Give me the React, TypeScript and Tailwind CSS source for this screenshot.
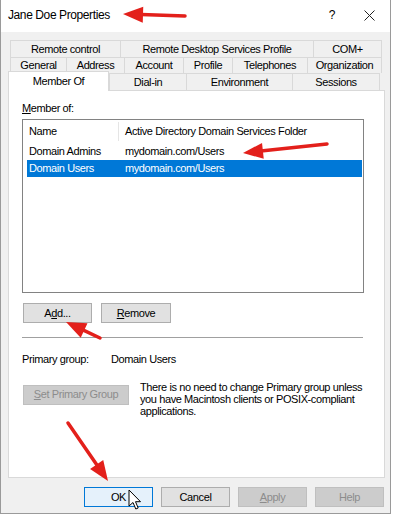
import React from "react";

const font = { fontFamily: '"Liberation Sans", Arial, sans-serif' };

const Tab = ({ label, w, last }: { label: string; w: string; last?: boolean }) => (
    <div
        className={`${w} h-full flex items-center justify-center border-t border-l border-[#d9d9d9] bg-[#f0f0f0] text-[11px] text-black ${last ? "border-r" : ""}`}
    >
        {label}
    </div>
);

const Btn = ({
    children,
    w = "w-[69px]",
    disabled,
    primary,
}: {
    children: React.ReactNode;
    w?: string;
    disabled?: boolean;
    primary?: boolean;
}) => (
    <div
        className={`${w} h-[20px] flex items-center justify-center text-[11px] border ${
            disabled
                ? "bg-[#cccccc] border-[#bfbfbf] text-[#8c8c8c]"
                : primary
                ? "bg-[#e5f1fb] border-[#0078d7] text-black"
                : "bg-[#e1e1e1] border-[#adadad] text-black"
        }`}
    >
        {children}
    </div>
);

const Arrow = ({ x1, y1, x2, y2 }: { x1: number; y1: number; x2: number; y2: number }) => {
    // tail (x1,y1) -> head (x2,y2)
    const dx = x2 - x1;
    const dy = y2 - y1;
    const len = Math.hypot(dx, dy);
    const ux = dx / len;
    const uy = dy / len;
    const hl = 20;
    const hw = 8;
    const bx = x2 - ux * hl;
    const by = y2 - uy * hl;
    const p1 = `${bx - uy * hw},${by + ux * hw}`;
    const p2 = `${bx + uy * hw},${by - ux * hw}`;
    return (
        <g>
            <line x1={x1} y1={y1} x2={bx + ux * 2} y2={by + uy * 2} stroke="#e3201b" strokeWidth="3.5" strokeLinecap="round" />
            <polygon points={`${x2},${y2} ${p1} ${p2}`} fill="#e3201b" />
        </g>
    );
};

export default function App() {
    return (
        <div className="w-[394px] h-[517px] bg-white overflow-hidden relative tracking-[-0.4px]" style={font}>
            <div className="w-[391px] h-[514px] border-l border-r border-b border-[#9a9a9a] bg-[#f0f0f0] flex flex-col">
                {/* Title bar */}
                <div className="h-[32px] bg-white flex items-center pl-[7px] text-[12px] text-black">
                    <span className="flex-1 pb-[2px]">Jane Doe Properties</span>
                    <span className="w-[40px] text-center pb-[2px]">?</span>
                    <span className="w-[38px] flex justify-center pr-[4px] pb-[2px]">
                        <svg width="11" height="11" viewBox="0 0 11 11">
                            <path d="M0.5 0.5 L10.5 10.5 M10.5 0.5 L0.5 10.5" stroke="#222" strokeWidth="1" />
                        </svg>
                    </span>
                </div>

                {/* Tabs */}
                <div className="mt-[8px] ml-[9px] w-[372px] flex flex-col">
                    <div className="h-[17px] flex">
                        <Tab label="Remote control" w="w-[110px]" />
                        <Tab label="Remote Desktop Services Profile" w="w-[193px]" />
                        <Tab label="COM+" w="w-[69px]" last />
                    </div>
                    <div className="h-[16px] flex">
                        <Tab label="General" w="w-[56px]" />
                        <Tab label="Address" w="w-[58px]" />
                        <Tab label="Account" w="w-[59px]" />
                        <Tab label="Profile" w="w-[49px]" />
                        <Tab label="Telephones" w="w-[75px]" />
                        <Tab label="Organization" w="w-[75px]" last />
                    </div>
                    <div className="h-[17px] flex">
                        <div className="w-[101px] -ml-[2px] h-[20px] relative -top-[2px] z-10 flex items-start justify-center pt-[1px] bg-white border-t border-l border-r border-[#d9d9d9] text-[11px]">
                            Member Of
                        </div>
                        <Tab label="Dial-in" w="w-[77px]" />
                        <Tab label="Environment" w="w-[106px]" />
                        <Tab label="Sessions" w="w-[88px]" last />
                    </div>
                </div>

                {/* Page */}
                <div className="ml-[7px] w-[377px] h-[388px] bg-white border border-[#d9d9d9] pl-[13px] pt-[9px] text-[11px] text-black">
                    <div className="h-[18px]">
                        <span className="underline underline-offset-1">M</span>ember of:
                    </div>
                    <div className="mt-[1px] w-[342px] h-[174px] border border-[#828282] flex flex-col">
                        <div className="h-[23px] flex items-center">
                            <span className="w-[95px] pl-[6px]">Name</span>
                            <span className="h-[19px] w-px bg-[#e5e5e5]" />
                            <span className="pl-[6px]">Active Directory Domain Services Folder</span>
                        </div>
                        <div className="h-[17px] flex items-center">
                            <span className="w-[102px] pl-[6px]">Domain Admins</span>
                            <span>mydomain.com/Users</span>
                        </div>
                        <div className="h-[17px] ml-[4px] mr-[1px] flex items-center bg-[#0078d7] text-white">
                            <span className="w-[98px] pl-[2px]">Domain Users</span>
                            <span>mydomain.com/Users</span>
                        </div>
                    </div>

                    <div className="mt-[10px] flex gap-[9px] ml-[1px]">
                        <Btn>
                            A<span className="underline underline-offset-1">d</span>d...
                        </Btn>
                        <Btn w="w-[70px]">
                            <span className="underline underline-offset-1">R</span>emove
                        </Btn>
                    </div>

                    <div className="mt-[14px] w-[341px] h-px bg-[#a0a0a0]" />

                    <div className="mt-[13px] flex">
                        <span className="w-[89px]">Primary group:</span>
                        <span>Domain Users</span>
                    </div>

                    <div className="mt-[17px] flex ml-[1px]">
                        <Btn w="w-[106px]" disabled>
                            <span className="underline underline-offset-1">S</span>et Primary Group
                        </Btn>
                        <p className="ml-[11px] -mt-[4px] leading-[12px] w-[228px]">
                            There is no need to change Primary group unless you have Macintosh clients or POSIX-compliant applications.
                        </p>
                    </div>
                </div>

                {/* Bottom buttons */}
                <div className="mt-[9px] pr-[6px] flex justify-end gap-[8px]">
                    <Btn primary>OK</Btn>
                    <Btn>Cancel</Btn>
                    <Btn disabled>
                        <span className="underline underline-offset-1">A</span>pply
                    </Btn>
                    <Btn disabled>Help</Btn>
                </div>
            </div>

            {/* Annotation arrows */}
            <svg className="absolute left-0 top-0 pointer-events-none" width="394" height="517">
                <Arrow x1={185} y1={16} x2={123} y2={14} />
                <Arrow x1={327} y1={144} x2={243} y2={153} />
                <Arrow x1={100} y1={338} x2={66} y2={322} />
                <Arrow x1={68} y1={423} x2={108} y2={481} />
            </svg>

            {/* Mouse cursor */}
            <svg className="absolute left-[128px] top-[489px]" width="14" height="22" viewBox="0 0 14 22">
                <path
                    d="M1 1 L1 17 L5 13.5 L7.8 20 L10.2 19 L7.5 12.7 L12.5 12.7 Z"
                    fill="white"
                    stroke="black"
                    strokeWidth="1"
                    strokeLinejoin="round"
                />
            </svg>
        </div>
    );
}
